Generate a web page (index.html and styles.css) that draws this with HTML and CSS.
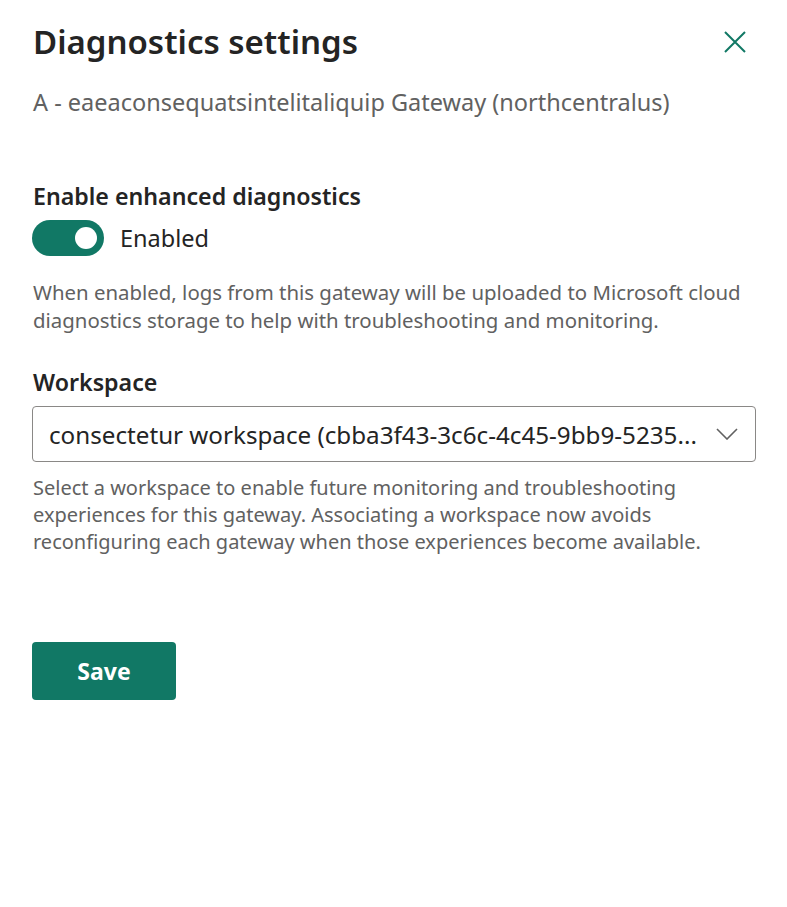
FILE: index.html
```html
<!DOCTYPE html>
<html lang="en">
<head>
<meta charset="utf-8">
<title>Diagnostics settings</title>
<link rel="stylesheet" href="styles.css">
</head>
<body>
<div class="panel">
  <div class="header">
    <h1 class="title">Diagnostics settings</h1>
    <button class="close" aria-label="Close">
      <svg width="22" height="22" viewBox="0 0 22 22"><path d="M1 1 L21 21 M21 1 L1 21" stroke="#117865" stroke-width="2" fill="none"/></svg>
    </button>
  </div>
  <div class="subtitle">A - eaeaconsequatsintelitaliquip Gateway (northcentralus)</div>

  <div class="section first">
    <div class="label">Enable enhanced diagnostics</div>
    <div class="toggle-row">
      <span class="toggle"><span class="knob"></span></span>
      <span class="toggle-text">Enabled</span>
    </div>
    <p class="desc">When enabled, logs from this gateway will be uploaded to Microsoft cloud diagnostics storage to help with troubleshooting and monitoring.</p>
  </div>

  <div class="section second">
    <div class="label">Workspace</div>
    <div class="dropdown">
      <span class="dropdown-text">consectetur workspace (cbba3f43-3c6c-4c45-9bb9-5235...</span>
      <svg class="chevron" width="22" height="12" viewBox="0 0 22 12"><path d="M1 1 L11 11 L21 1" stroke="#616161" stroke-width="1.6" fill="none"/></svg>
    </div>
    <p class="desc help">Select a workspace to enable future monitoring and troubleshooting experiences for this gateway. Associating a workspace now avoids reconfiguring each gateway when those experiences become available.</p>
  </div>

  <button class="save">Save</button>
</div>
</body>
</html>
```
FILE: styles.css
```css
html, body {
  margin: 0;
  padding: 0;
  background: #ffffff;
}
body {
  font-family: "Noto Sans", "Open Sans", sans-serif;
  color: #242424;
}
.panel {
  width: 787px;
  box-sizing: border-box;
  padding: 20px 32px 0 32px;
}
.header {
  display: flex;
  justify-content: space-between;
  align-items: flex-start;
}
.title {
  margin: 0 0 0 1px;
  font-size: 33px;
  font-weight: 600;
  line-height: 44px;
  color: #242424;
}
.close {
  border: none;
  background: none;
  padding: 0;
  margin: 11px 9px 0 0;
  width: 22px;
  height: 22px;
  display: flex;
}
.subtitle {
  margin: 23px 0 0 1px;
  font-size: 23.5px;
  line-height: 30px;
  color: #616161;
  white-space: nowrap;
}
.section.first {
  margin-top: 64px;
}
.label {
  margin-left: 1px;
  font-size: 23.2px;
  font-weight: 600;
  line-height: 30px;
  color: #242424;
}
.toggle-row {
  display: flex;
  align-items: center;
  gap: 16px;
  margin-top: 9px;
}
.toggle {
  width: 72px;
  height: 36px;
  border-radius: 18px;
  background: #117865;
  display: flex;
  align-items: center;
  justify-content: flex-end;
  padding-right: 7px;
  box-sizing: border-box;
}
.knob {
  width: 22px;
  height: 22px;
  border-radius: 50%;
  background: #ffffff;
}
.toggle-text {
  font-size: 23.5px;
  line-height: 30px;
  color: #242424;
}
.desc {
  margin: 22px 0 0 1px;
  font-size: 20.4px;
  line-height: 28px;
  color: #616161;
}
.section.second {
  margin-top: 33px;
}
.dropdown {
  margin-top: 9px;
  height: 56px;
  width: 724px;
  box-sizing: border-box;
  border: 1px solid #8a8886;
  border-radius: 4px;
  display: flex;
  align-items: center;
  justify-content: space-between;
  padding: 0 17px 0 16px;
}
.dropdown-text {
  font-size: 24.2px;
  color: #242424;
  white-space: nowrap;
}
.help {
  margin-top: 12px;
  font-size: 20px;
  line-height: 27px;
}
.save {
  margin-top: 87px;
  width: 144px;
  height: 58px;
  border: none;
  border-radius: 4px;
  background: #117865;
  color: #ffffff;
  font-family: "Noto Sans", "Open Sans", sans-serif;
  font-size: 23px;
  font-weight: 700;
}
```
